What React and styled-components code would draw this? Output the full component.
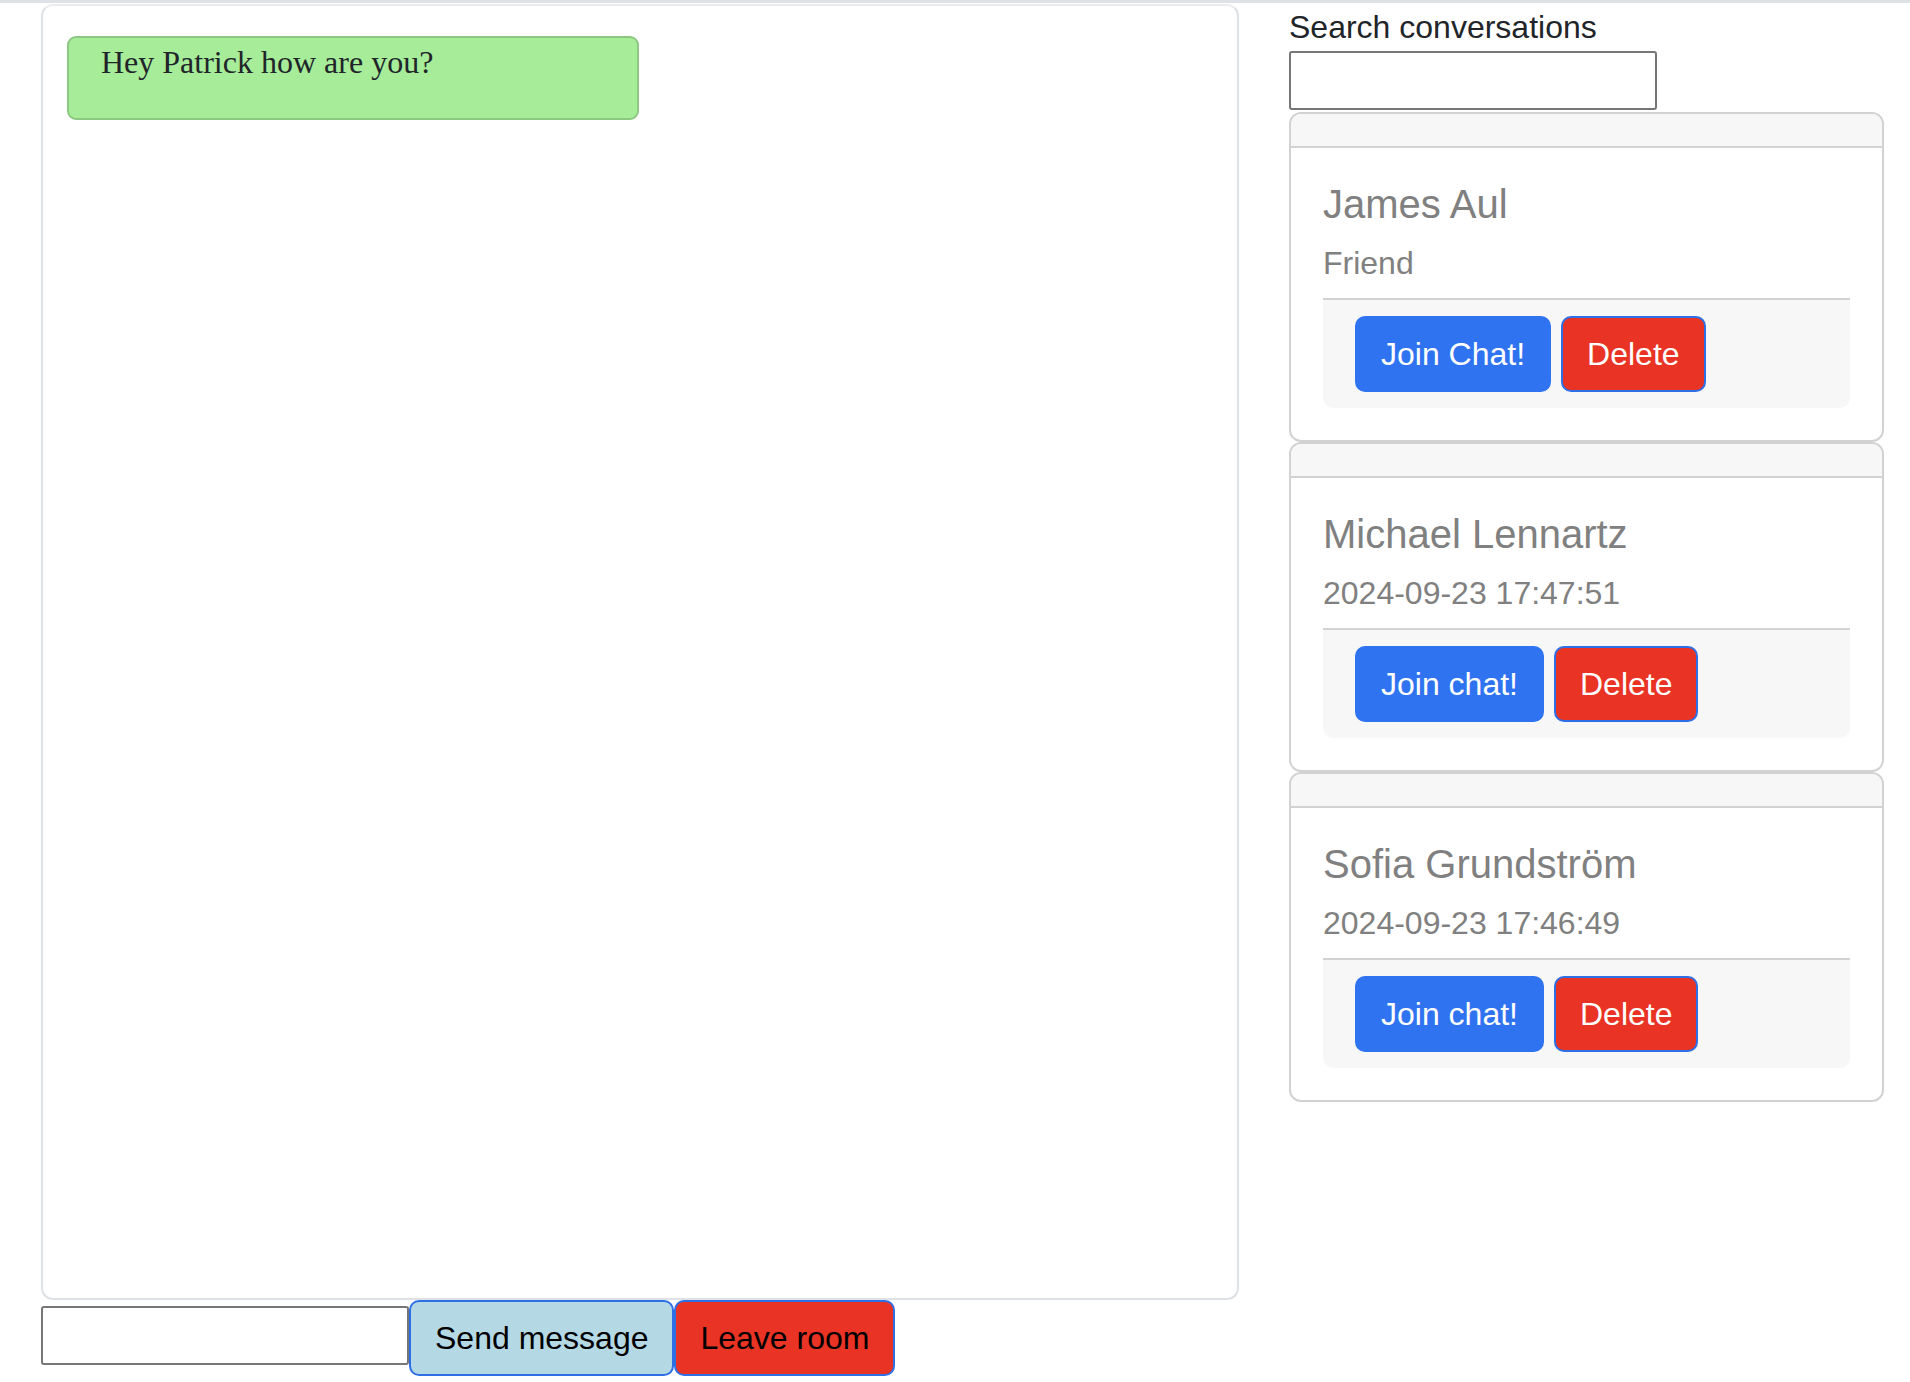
import React from "react";
import styled, { createGlobalStyle } from "styled-components";

const GlobalStyle = createGlobalStyle`
  html, body {
    margin: 0;
    padding: 0;
    background: #ffffff;
    font-family: "Liberation Sans", Arial, sans-serif;
    color: #212529;
  }
  * {
    box-sizing: border-box;
  }
`;

const Page = styled.div`
  width: 1910px;
  min-height: 1382px;
  border-top: 3px solid #dee2e6;
  padding: 0 26px 0 41px;
`;

const Layout = styled.div`
  display: grid;
  grid-template-columns: 1198px 595px;
  column-gap: 50px;
  align-items: start;
`;

const ChatColumn = styled.div`
  display: flex;
  flex-direction: column;
`;

const ChatBox = styled.div`
  height: 1296px;
  margin-top: 1px;
  border: 2px solid #dee2e6;
  border-top-color: #e9ecef;
  border-radius: 12px;
  padding: 30px 24px;
`;

const Bubble = styled.div`
  width: 572px;
  background: #a6ec99;
  border: 2px solid #8cc882;
  border-radius: 9px;
  padding: 0 32px;

  p {
    margin: 0 0 32px;
    font-family: "Liberation Serif", "Times New Roman", serif;
    font-size: 32px;
    line-height: 48px;
    color: #212529;
  }
`;

const Composer = styled.div`
  display: flex;
  align-items: flex-start;
  margin-top: 0;
`;

const TextInput = styled.input`
  width: 368px;
  height: 59px;
  border: 2px solid #767676;
  border-radius: 3px;
  font-size: 26px;
  padding: 2px 4px;
  margin-top: ${(p) => p.$shift || 0}px;
  background: #fff;
  outline: none;
`;

const Button = styled.button`
  font-family: "Liberation Sans", Arial, sans-serif;
  font-size: 32px;
  line-height: 48px;
  padding: 12px 24px;
  border: 2px solid #2e6fe6;
  border-radius: 10px;
  cursor: pointer;
  color: ${(p) => (p.$dark ? "#000000" : "#ffffff")};
  background: ${(p) =>
    p.$tone === "blue"
      ? "#2f73f1"
      : p.$tone === "light"
      ? "#b4d8e4"
      : "#e93324"};
  border-color: ${(p) => (p.$tone === "blue" ? "#2f73f1" : "#2e6fe6")};
`;

const Sidebar = styled.div`
  display: flex;
  flex-direction: column;
  align-items: flex-start;
`;

const Label = styled.label`
  font-size: 32px;
  line-height: 48px;
  color: #212529;
`;

const CardList = styled.div`
  width: 100%;
  margin-top: 2px;
  display: flex;
  flex-direction: column;
`;

const Card = styled.div`
  border: 2px solid #d2d2d2;
  border-radius: 12px;
  overflow: hidden;
  background: #fff;
`;

const CardHeader = styled.div`
  height: 34px;
  background: #f7f7f7;
  border-bottom: 2px solid #d2d2d2;
`;

const CardBody = styled.div`
  padding: 32px;
`;

const Title = styled.h5`
  margin: 0 0 16px;
  font-size: 40px;
  line-height: 48px;
  font-weight: 400;
  color: #808080;
`;

const Subtitle = styled.h6`
  margin: 0 0 16px;
  font-size: 32px;
  line-height: 38px;
  font-weight: 400;
  color: #808080;
`;

const CardFooter = styled.div`
  display: flex;
  gap: 10px;
  padding: 16px 32px;
  background: #f7f7f7;
  border-top: 2px solid #d2d2d2;
  border-radius: 0 0 10px 10px;
`;

const conversations = [
  { name: "James Aul", sub: "Friend", join: "Join Chat!" },
  { name: "Michael Lennartz", sub: "2024-09-23 17:47:51", join: "Join chat!" },
  { name: "Sofia Grundström", sub: "2024-09-23 17:46:49", join: "Join chat!" },
];

function ConversationCard({ name, sub, join }) {
  return (
    <Card>
      <CardHeader />
      <CardBody>
        <Title>{name}</Title>
        <Subtitle>{sub}</Subtitle>
        <CardFooter>
          <Button $tone="blue">{join}</Button>
          <Button $tone="red">Delete</Button>
        </CardFooter>
      </CardBody>
    </Card>
  );
}

export default function App() {
  return (
    <>
      <GlobalStyle />
      <Page>
        <Layout>
          <ChatColumn>
            <ChatBox>
              <Bubble>
                <p>Hey Patrick how are you?</p>
              </Bubble>
            </ChatBox>
            <Composer>
              <TextInput type="text" $shift={6} />
              <Button $tone="light" $dark>
                Send message
              </Button>
              <Button $tone="red" $dark>
                Leave room
              </Button>
            </Composer>
          </ChatColumn>

          <Sidebar>
            <Label>Search conversations</Label>
            <TextInput type="text" />
            <CardList>
              {conversations.map((c) => (
                <ConversationCard key={c.name} {...c} />
              ))}
            </CardList>
          </Sidebar>
        </Layout>
      </Page>
    </>
  );
}
